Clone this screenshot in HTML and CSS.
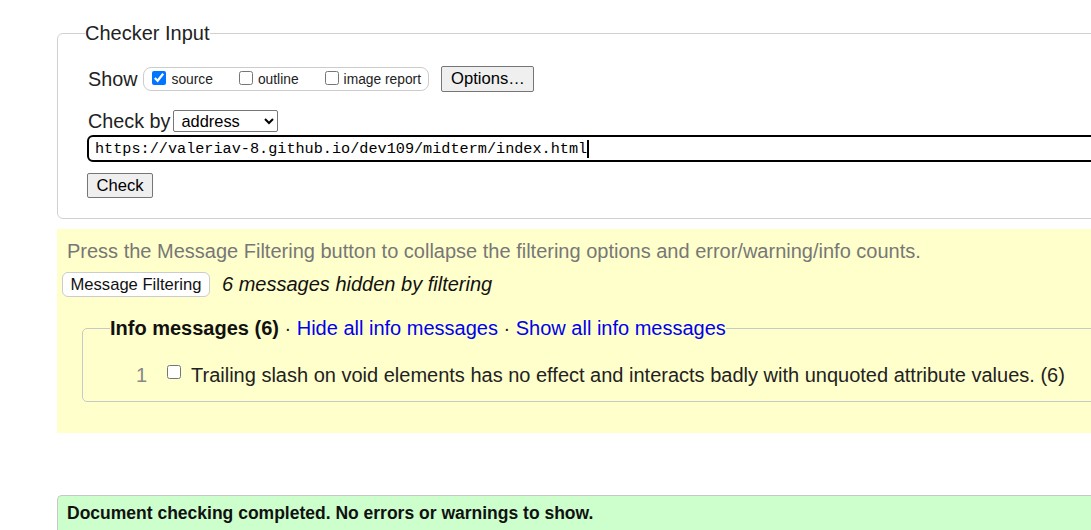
FILE: index.html
```html
<!DOCTYPE html>
<html lang="en">
<head>
<meta charset="utf-8">
<title>Nu Html Checker</title>
<link rel="stylesheet" href="styles.css">
</head>
<body>
<div class="page">
  <fieldset class="input-box">
    <legend class="input-legend">Checker Input</legend>
    <div class="row show-row">
      <span class="lbl">Show</span>
      <span class="show-group">
        <label class="opt"><input type="checkbox" checked>source</label>
        <label class="opt"><input type="checkbox">outline</label>
        <label class="opt"><input type="checkbox">image report</label>
      </span>
      <button class="btn options-btn">Options…</button>
    </div>
    <div class="row checkby-row">
      <span class="lbl">Check by</span>
      <select class="sel"><option>address</option></select>
    </div>
    <div class="row url-row">
      <input class="url" type="url" value="https://valeriav-8.github.io/dev109/midterm/index.html"><span class="caret"></span>
    </div>
    <div class="row check-row">
      <button class="btn check-btn">Check</button>
    </div>
  </fieldset>

  <section class="filters">
    <p class="hint">Press the Message Filtering button to collapse the filtering options and error/warning/info counts.</p>
    <div class="filter-row">
      <button class="filter-btn">Message Filtering</button>
      <span class="hidden-count">6 messages hidden by filtering</span>
    </div>
    <fieldset class="info-box">
      <legend class="info-legend"><strong>Info messages (6)</strong> · <a href="#">Hide all info messages</a> · <a href="#">Show all info messages</a></legend>
      <div class="msg">
        <span class="msg-num">1</span>
        <input class="msg-check" type="checkbox">
        <span class="msg-text">Trailing slash on void elements has no effect and interacts badly with unquoted attribute values. (6)</span>
      </div>
    </fieldset>
  </section>

  <div class="done">Document checking completed. No errors or warnings to show.</div>
</div>
</body>
</html>
```

FILE: styles.css
```css
html, body {
  margin: 0;
  padding: 0;
  background: #fff;
  overflow: hidden;
}
body {
  font-family: "Liberation Sans", Arial, sans-serif;
  color: #222;
  width: 1091px;
  height: 530px;
}
.page {
  padding-left: 57px;
  width: 1200px;
}

/* Checker input */
.input-box {
  margin: 22px 0 0 0;
  border: 1px solid #d0d0d0;
  border-radius: 6px;
  padding: 0 0 20px 30px;
  width: 1150px;
  box-sizing: border-box;
}
.input-legend {
  font-size: 20px;
  line-height: 22px;
  padding: 0;
  margin-left: -3px;
  color: #222;
}
.row {
  display: flex;
  align-items: center;
}
.show-row {
  margin-top: 22px;
  height: 26px;
}
.lbl {
  font-size: 19.8px;
}
.show-group {
  display: inline-flex;
  align-items: center;
  margin-left: 6px;
  height: 24px;
  box-sizing: border-box;
  border: 1px solid #ccc;
  border-radius: 8px;
  padding: 0 0 0 5px;
  width: 286px;
}
.opt {
  display: inline-flex;
  align-items: center;
  font-size: 13.8px;
  margin-right: 23px;
}
.opt:last-child { margin-right: 0; }
.opt input {
  margin: 0 5px 3px 3px;
  width: 14px;
  height: 14px;
}
.btn {
  font-family: "Liberation Sans", Arial, sans-serif;
  font-size: 16.6px;
  background: #efefef;
  border: 1px solid #767676;
  border-radius: 2px;
  color: #000;
  padding: 0;
  box-sizing: border-box;
}
.options-btn {
  margin-left: 12px;
  width: 93px;
  height: 26px;
}
.checkby-row {
  margin-top: 18px;
  height: 22px;
}
.sel {
  margin-left: 3px;
  width: 105px;
  height: 22px;
  font-family: "Liberation Sans", Arial, sans-serif;
  font-size: 16.4px;
  color: #000;
  border: 1px solid #767676;
  border-radius: 2px;
  background: #fff;
  padding: 0 0 0 3px;
}
.url-row {
  margin-top: 3px;
  margin-left: -1px;
  position: relative;
}
.url {
  width: 1100px;
  height: 27px;
  box-sizing: border-box;
  border: 2px solid #000;
  border-radius: 6px;
  padding: 0 0 0 6px;
  font-family: "Liberation Mono", "DejaVu Sans Mono", monospace;
  font-size: 15.2px;
  color: #000;
  outline: none;
}
.caret {
  position: absolute;
  left: 500px;
  top: 5px;
  width: 2px;
  height: 18px;
  background: #000;
}
.check-row {
  margin-top: 11px;
  margin-left: -1px;
}
.check-btn {
  width: 66px;
  height: 25px;
}

/* Filters */
.filters {
  margin-top: 10px;
  background: #ffffcc;
  height: 204px;
  padding: 11px 0 0 0;
  box-sizing: border-box;
}
.hint {
  margin: 0 0 0 10px;
  font-size: 20px;
  line-height: 22px;
  color: #777;
}
.filter-row {
  display: flex;
  align-items: center;
  margin: 10px 0 0 5px;
}
.filter-btn {
  font-family: "Liberation Sans", Arial, sans-serif;
  font-size: 16.6px;
  background: #fff;
  color: #111;
  border: 1px solid #ccc;
  border-radius: 6px;
  width: 148px;
  height: 25px;
  padding: 0;
}
.hidden-count {
  margin-left: 12px;
  font-size: 20px;
  font-style: italic;
  color: #111;
}
.info-box {
  margin: 20px 0 0 25px;
  border: 1px solid #c8c8c8;
  border-radius: 5px;
  padding: 0;
  width: 1100px;
  height: 85px;
  box-sizing: border-box;
}
.info-legend {
  font-size: 20px;
  line-height: 22px;
  padding: 0;
  margin-left: 27px;
  color: #222;
}
.info-legend strong { color: #111; }
.info-legend a {
  color: #0000ee;
  text-decoration: none;
}
.msg {
  display: flex;
  align-items: center;
  margin-top: 25px;
  height: 22px;
}
.msg-num {
  width: 64px;
  text-align: right;
  font-size: 20px;
  color: #888;
}
.msg-check {
  margin: 0 0 6px 20px;
  width: 14px;
  height: 14px;
}
.msg-text {
  margin-left: 10px;
  font-size: 20px;
  color: #222;
}

/* Done */
.done {
  margin-top: 62px;
  background: #ccffcc;
  border-top: 1px solid #c8c8c8;
  border-left: 1px solid #c8c8c8;
  border-radius: 5px 0 0 0;
  padding: 7px 0 8px 9px;
  font-size: 17.5px;
  font-weight: bold;
  color: #111;
  width: 1100px;
  box-sizing: border-box;
}
```
